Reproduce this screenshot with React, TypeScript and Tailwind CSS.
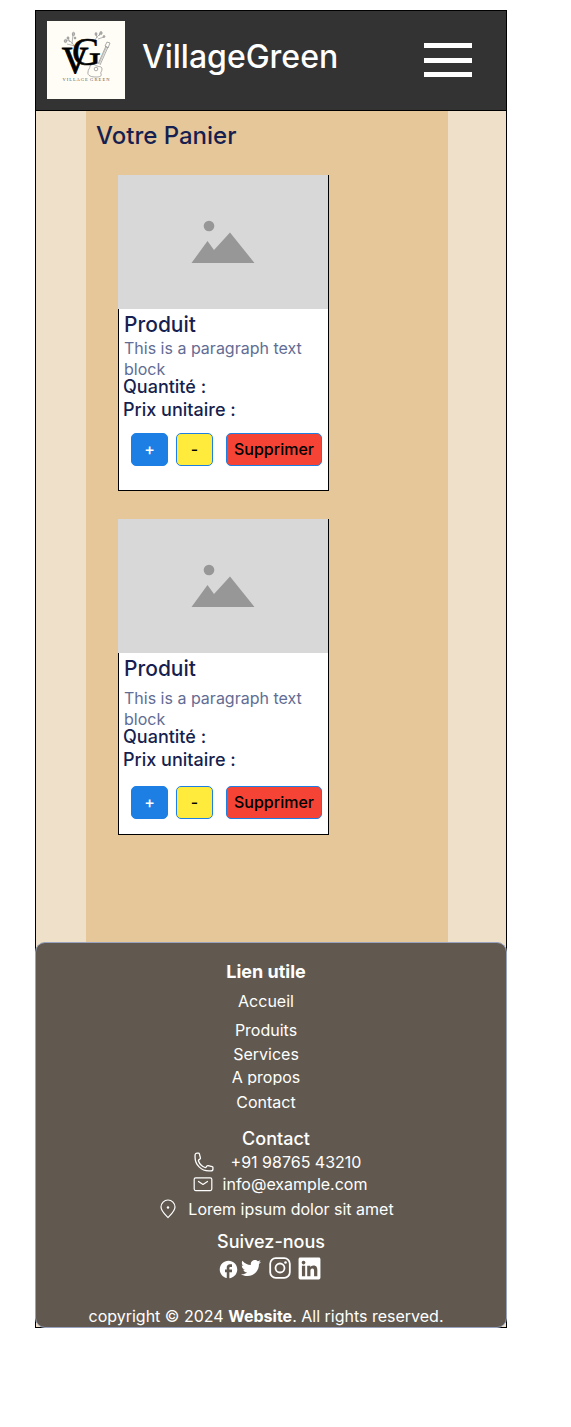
import { FaLinkedin, FaTwitter } from "react-icons/fa";
import { MdFacebook } from "react-icons/md";

function Logo() {
  return (
    <svg viewBox="0 0 78 78" className="size-[78px] shrink-0" role="img" aria-label="Village Green">
      <rect width="78" height="78" fill="#fffdf6" />
      <g fill="none" stroke="#888" strokeWidth="0.6">
        <path d="M28 27C26 22 24 20 19 19M25 23l1-10M23 21l-2-4M28 25l-8-2" />
        <path d="M48 20c1-4 3-5 7-9M50 17l-1-4M52 15l1-3M51 18l6-2" />
      </g>
      <g fill="#bbb" stroke="#777" strokeWidth="0.5">
        <ellipse cx="18.500" cy="20" rx="1.300" ry="1.600" />
        <ellipse cx="26.500" cy="13" rx="1.200" ry="1.800" />
        <ellipse cx="21" cy="17" rx="1" ry="1.300" />
        <circle cx="28" cy="17" r="1" />
        <ellipse cx="49" cy="13" rx="1" ry="1.500" />
        <ellipse cx="54" cy="12" rx="1.200" ry="1.500" />
        <circle cx="57" cy="15.500" r="1" />
      </g>
      <g fill="none" stroke="#888" strokeWidth="0.7">
        <path d="M51 43l8-18M53 44l8-18M58 25l2-4 3 1-2 5z" />
        <path d="M52 43l8-18" strokeWidth="0.5" />
        <path d="M43 45c3-3 5-1 7 0s5 0 5 3-2 3-1 5-1 3-5 3-9-1-8-5c0-3 2-3 2-6z" />
        <circle cx="49" cy="48" r="1.800" />
      </g>
      <text x="28" y="52" fontSize="37" fontFamily="Liberation Serif, serif" fill="#000" stroke="#000" strokeWidth="0.8" textAnchor="middle">
        V
      </text>
      <text x="39.500" y="44" fontSize="40" fontFamily="Liberation Serif, serif" fill="#000" stroke="#000" strokeWidth="0.6" textAnchor="middle">
        G
      </text>
      <text x="39" y="59.500" fontSize="4.500" fontFamily="Liberation Serif, serif" fill="#555" textAnchor="middle">
        V I L L A G E &#160;G R E E N
      </text>
    </svg>
  );
}

function Placeholder() {
  return (
    <div className="-mt-px -ml-px h-[134px] bg-[#d8d8d8]">
      <svg viewBox="0 0 210 134" className="h-full w-full" role="img" aria-label="Produit">
        <circle cx="91" cy="51" r="5.3" fill="#979797" />
        <path d="M73.500 88L89.500 66L96 75L112 57.500L136.500 88Z" fill="#979797" />
      </svg>
    </div>
  );
}

function ProductCard({ spacious = false }: { spacious?: boolean }) {
  return (
    <article className="h-[316px] w-[211px] border border-black bg-white text-[#161f50]">
      <Placeholder />
      <h2 className="mt-0.5 pl-[5px] text-[21px] leading-7 font-medium">Produit</h2>
      <p className={`pl-[5px] leading-[21px] text-[#626c94] ${spacious ? "mt-[5px]" : "-mt-px"}`}>
        This is a paragraph text block
      </p>
      <div className="-mt-[5px] pl-1 text-lg leading-[23px] font-medium">
        <p>Quantité :</p>
        <p>Prix unitaire :</p>
      </div>
      <div className={`flex h-[33px] pl-3 leading-[31px] font-medium ${spacious ? "mt-[15px]" : "mt-3"}`}>
        <button type="button" className="w-[37px] rounded-[5px] border border-[#1d7fe3] bg-[#1d7fe3] text-white">
          +
        </button>
        <button type="button" className="ml-2 w-[37px] rounded-[5px] border border-[#1d7fe3] bg-[#ffeb3b] text-black">
          -
        </button>
        <button type="button" className="ml-[13px] w-24 rounded-[5px] border border-[#1d7fe3] bg-[#f54336] text-black">
          Supprimer
        </button>
      </div>
    </article>
  );
}

function PhoneIcon() {
  return (
    <svg viewBox="0 0 24 24" className="size-[22px]" fill="none" stroke="currentColor" strokeWidth="1.4" strokeLinejoin="round" aria-hidden="true">
      <path d="M2.250 6.750c0 8.280 6.720 15 15 15h2.250a2.250 2.250 0 0 0 2.250-2.250v-1.370c0-.520-.350-.970-.850-1.090l-4.430-1.110c-.440-.110-.900.060-1.170.420l-.970 1.290c-.280.380-.770.540-1.210.380a12.040 12.040 0 0 1-7.140-7.140c-.160-.440.010-.930.380-1.210l1.290-.970c.360-.270.530-.730.420-1.170L6.960 3.100a1.130 1.130 0 0 0-1.090-.850H4.500A2.250 2.250 0 0 0 2.250 4.500z" />
    </svg>
  );
}

function MailIcon() {
  return (
    <svg viewBox="0 0 20 16" className="h-4 w-5" fill="none" stroke="currentColor" strokeWidth="1.2" strokeLinecap="round" strokeLinejoin="round" aria-hidden="true">
      <rect x="1.200" y="1.800" width="17.600" height="12.800" rx="1.500" />
      <path d="M5.500 5.500L10 8.500L14.500 5.500" />
    </svg>
  );
}

function PinIcon() {
  return (
    <svg viewBox="0 0 16 20" className="h-5 w-4" fill="none" stroke="currentColor" strokeWidth="1.200" strokeLinejoin="round" aria-hidden="true">
      <path d="M8 18.500C5 15.500 1 12 1 8a7 7 0 0 1 14 0c0 4-4 7.500-7 10.500z" />
      <circle cx="8" cy="8.500" r="1.200" fill="currentColor" stroke="none" />
    </svg>
  );
}

function InstagramIcon() {
  return (
    <svg viewBox="0 0 22 22" className="size-[22px]" fill="none" stroke="currentColor" strokeWidth="1.800" aria-hidden="true">
      <rect x="1.200" y="1.200" width="19.600" height="19.600" rx="5.500" />
      <circle cx="11" cy="11" r="4.500" />
      <circle cx="16.500" cy="5.500" r="1.300" fill="currentColor" stroke="none" />
    </svg>
  );
}

export default function App() {
  return (
    <div className="pt-2.5 pr-16 pb-[99px] pl-[35px] font-['Inter',sans-serif] text-base">
      <div className="border border-black bg-[#efe0ca]">
        <header className="flex h-[100px] items-start border-b border-black bg-[#333] pt-2.5 pr-[34px] pl-[11px] text-white">
          <Logo />
          <span className="mt-4 ml-[17px] text-[32px] leading-10 font-medium">VillageGreen</span>
          <button type="button" aria-label="Menu" className="mt-[22px] ml-auto flex h-[34px] w-12 flex-col justify-between">
            <span className="h-[5px] w-full bg-white" />
            <span className="h-[5px] w-full bg-white" />
            <span className="h-[5px] w-full bg-white" />
          </button>
        </header>

        <main className="mr-[58px] ml-[50px] h-[831px] bg-[#e5c799]">
          <h1 className="pt-[9px] pl-2.5 text-2xl leading-8 font-medium text-[#161f50]">Votre Panier</h1>
          <div className="mt-[23px] ml-8 flex flex-col gap-7">
            <ProductCard />
            <ProductCard spacious />
          </div>
        </main>

        <footer className="-mx-px -mb-px flex flex-col items-center rounded-[10px] border border-[#98a3bf] bg-[#61594f] pt-[17px] text-white">
          <nav className="flex flex-col items-center pr-2.5 leading-6" aria-label="Lien utile">
            <h2 className="text-lg leading-6 font-bold">Lien utile</h2>
            <a href="#accueil" className="mt-[5px]">Accueil</a>
            <a href="#produits" className="mt-[5px]">Produits</a>
            <a href="#services">Services</a>
            <a href="#apropos" className="-mt-px h-5 overflow-hidden">A propos</a>
            <a href="#contact" className="mt-[5px]">Contact</a>
          </nav>
          <h2 className="mt-[13px] pl-2.5 text-lg leading-6 font-medium">Contact</h2>
          <div className="flex h-[22px] items-center gap-4 pl-3">
            <PhoneIcon />
            <span>+91 98765 43210</span>
          </div>
          <div className="flex h-[22px] items-center gap-2.5 pl-[18px]">
            <MailIcon />
            <span>info@example.com</span>
          </div>
          <div className="mt-[3px] flex h-[22px] items-center gap-3 pl-3">
            <PinIcon />
            <span>Lorem ipsum dolor sit amet</span>
          </div>
          <h2 className="mt-2.5 text-lg leading-6 font-medium">Suivez-nous</h2>
          <div className="mt-0.5 flex h-6 items-center pr-0.5">
            <a href="#facebook" aria-label="Facebook" className="mt-0.5"><MdFacebook size={21} /></a>
            <a href="#twitter" aria-label="Twitter" className="ml-0.5"><FaTwitter size={20} /></a>
            <a href="#instagram" aria-label="Instagram" className="ml-2"><InstagramIcon /></a>
            <a href="#linkedin" aria-label="LinkedIn" className="ml-1.5"><FaLinkedin size={25} /></a>
          </div>
          <p className="mt-[26px] pr-2.5 pb-px leading-5">
            copyright © 2024 <strong className="font-bold">Website</strong>. All rights reserved.
          </p>
        </footer>
      </div>
    </div>
  );
}
